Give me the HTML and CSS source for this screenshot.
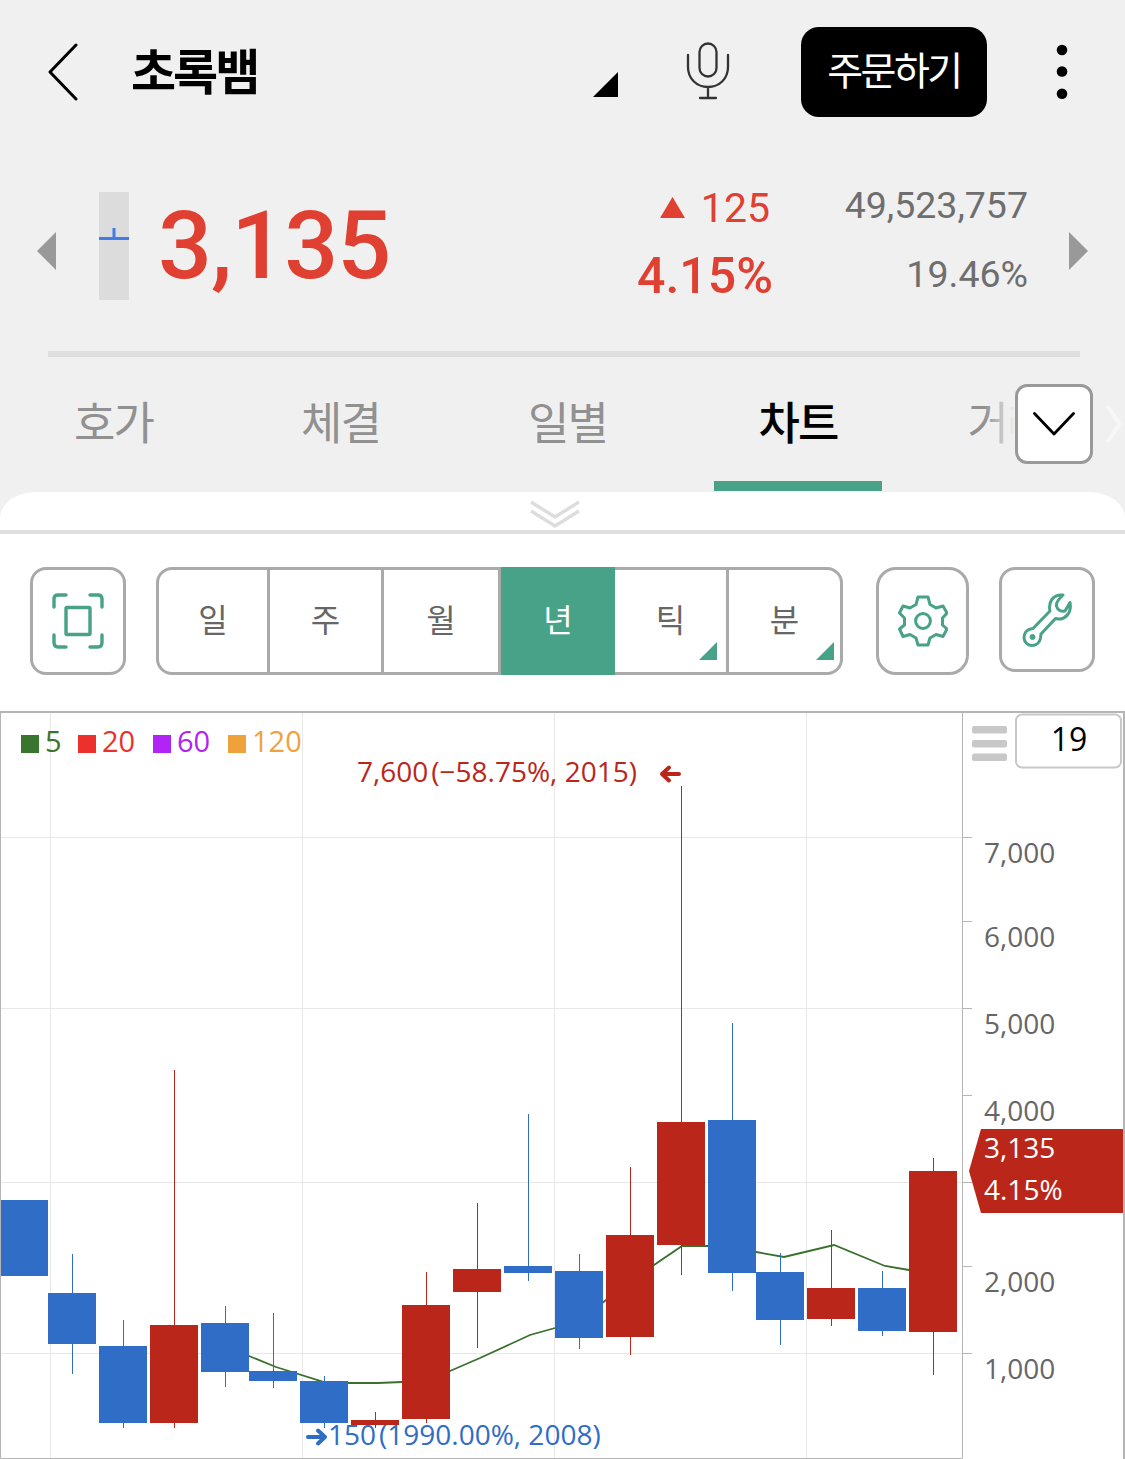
FILE: index.html
```html
<!DOCTYPE html>
<html lang="ko">
<head>
    <meta charset="UTF-8">
    <meta name="viewport" content="width=device-width, initial-scale=1.0">
    <title>초록뱀 - 차트</title>
    <link rel="stylesheet" href="styles.css">
</head>
<body>
    <div class="app">
        <header class="top">
            <div class="title-bar">
                <svg class="back" width="30" height="58" viewBox="0 0 30 58">
                    <path d="M28 2L2 29L28 56" fill="none" stroke="#000" stroke-width="3" stroke-linecap="round" stroke-linejoin="round"/>
                </svg>
                <h1 class="stock-name">초록뱀</h1>
                <svg class="corner" width="25" height="25" viewBox="0 0 25 25"><path d="M25 0V25H0Z"/></svg>
                <svg class="mic" width="44" height="60" viewBox="0 0 44 60" fill="none" stroke="#333" stroke-width="2.3" stroke-linecap="round">
                    <rect x="13.5" y="1.500" width="17" height="33" rx="8.5"/>
                    <path d="M2 13V25C2 37 11 45 22 45S42 37 42 25V13M22 45V56M14 56H30"/>
                </svg>
                <button class="order-btn">주문하기</button>
                <svg class="more" width="12" height="56" viewBox="0 0 12 56">
                    <circle cx="6" cy="6" r="5.3"/><circle cx="6" cy="27.5" r="5.3"/><circle cx="6" cy="49.7" r="5.3"/>
                </svg>
            </div>

            <div class="quote">
                <svg class="prev" width="19" height="38" viewBox="0 0 19 38"><path d="M19 0V38L0 19Z" fill="#999"/></svg>
                <svg class="mini-candle" width="30" height="108" viewBox="0 0 30 108">
                    <path d="M0 0H30V108H0Z" fill="#dcdcdc"/>
                    <path d="M0 46.5H30M15 36V46" stroke="#427be8" stroke-width="3" fill="none"/>
                </svg>
                <strong class="price">3,135</strong>
                <div class="change">
                    <div class="diff"><svg width="25" height="21" viewBox="0 0 25 21"><path d="M12.5 0L25 21H0Z" fill="#df4031"/></svg>125</div>
                    <div class="rate">4.15%</div>
                </div>
                <div class="volume">
                    <div>49,523,757</div>
                    <div>19.46%</div>
                </div>
                <svg class="next" width="19" height="38" viewBox="0 0 19 38"><path d="M0 0V38L19 19Z" fill="#999"/></svg>
            </div>

            <nav class="tabs">
                <a class="tab">호가</a>
                <a class="tab">체결</a>
                <a class="tab">일별</a>
                <a class="tab active">차트</a>
                <a class="tab last">거래</a>
                <div class="tab-more">
                    <button class="tab-toggle">
                        <svg width="42" height="24" viewBox="0 0 42 24"><path d="M1.5 1.5L21 22L40.500 1.500" fill="none" stroke="#000" stroke-width="2.8" stroke-linecap="round" stroke-linejoin="round"/></svg>
                    </button>
                    <svg class="tab-next" width="18" height="40" viewBox="0 0 18 40"><path d="M2 2L15 20L2 38" fill="none" stroke="#f7f7f7" stroke-width="4"/></svg>
                </div>
            </nav>
        </header>

        <div class="sheet-handle">
            <svg width="50" height="28" viewBox="0 0 50 28" fill="none" stroke="#ddd" stroke-width="3.4"><path d="M1 2L25 17L49 2M1 11L25 26L49 11"/></svg>
        </div>

        <div class="toolbar">
            <button class="tool">
                <svg width="52" height="56" viewBox="0 0 52 56" fill="none" stroke="#48a288" stroke-width="3.4" stroke-linecap="round" stroke-linejoin="round">
                    <path d="M2 14V6Q2 2 6 2H14M38 2H46Q50 2 50 6V14M50 42V49Q50 54 46 54H38M14 54H6Q2 54 2 49V42"/>
                    <rect x="14" y="14.500" width="24" height="27" rx="1"/>
                </svg>
            </button>
            <div class="periods">
                <button class="day">일</button>
                <button>주</button>
                <button class="month">월</button>
                <button class="active">년</button>
                <button class="has-menu">틱</button>
                <button class="has-menu minute">분</button>
            </div>
            <button class="tool settings">
                <svg width="50" height="52" viewBox="0 0 50 52" fill="none" stroke="#48a288" stroke-width="3" stroke-linejoin="round">
                    <path d="M20 2H30L32 9.500L38 13L45 11L49 18L44.500 23V30L49 34L45 41.500L38 39.500L32 43L30 50H20L18 43L12 39.500L5 41.500L1.500 34L6.500 30V23L1.500 18L5 11L12 13L18 9.500Z"/>
                    <circle cx="25" cy="26" r="7.400"/>
                </svg>
            </button>
            <button class="tool wrench">
                <svg width="50" height="54" viewBox="0 0 50 54" fill="none" stroke="#48a288" stroke-width="3" stroke-linejoin="round">
                    <path d="M41 2C31 1 26 9 28 18L11 35.500C4 36 2 41 2 45C3 55 17 55 18.500 45L19 41L33.500 25.500C43 28 50 20 48 9.500L43 18Q36 19 34.500 13Q33.500 9 41 2Z"/>
                    <circle cx="10.500" cy="44" r="2.500" fill="#48a288" stroke-width="1"/>
                </svg>
            </button>
        </div>

        <svg class="chart" width="1125" height="748" viewBox="0 711 1125 748">
            <!-- grid -->
            <path class="grid" d="M0 837.5H962M0 1008.5H962M0 1182.5H962M0 1353.5H962M50.500 713V1458M302.500 713V1458M554.500 713V1458M806.500 713V1458"/>

            <!-- 5 year moving average -->
            <polyline class="ma5" points="225,1346 249,1356 276,1367 324,1382 350,1383 378,1383 402,1382 426,1381 450,1371 480,1358 530,1335 555,1328 582,1319 606,1300 654,1265 682,1246 708,1246 733,1249 756,1252 784,1257 834,1245 885,1266 909,1270 933,1274"/>

            <g class="down">
                <path d="M72.500 1254V1374M123.500 1320V1428M225.500 1306V1387M273.500 1313V1388M324.500 1376V1428M528.500 1114V1281M579.500 1254V1349M732.500 1023V1291M780.500 1253V1345M882.500 1271V1336"/>
                <rect x="1" y="1200" width="47" height="76"/>
                <rect x="48" y="1293" width="48" height="51"/>
                <rect x="99" y="1346" width="48" height="77"/>
                <rect x="201" y="1323" width="48" height="49"/>
                <rect x="249" y="1371" width="48" height="10"/>
                <rect x="300" y="1381" width="48" height="42"/>
                <rect x="504" y="1266" width="48" height="7"/>
                <rect x="555" y="1271" width="48" height="67"/>
                <rect x="708" y="1120" width="48" height="153"/>
                <rect x="756" y="1272" width="48" height="48"/>
                <rect x="858" y="1288" width="48" height="43"/>
            </g>
            <g class="up">
                <path d="M174.500 1070V1428M375.500 1412V1428M426.500 1272V1423M477.500 1203V1348M630.500 1167V1355M681.500 786V1275M831.500 1230V1326M933.500 1158V1375"/>
                <rect x="150" y="1325" width="48" height="98"/>
                <rect x="351" y="1420" width="48" height="5"/>
                <rect x="402" y="1305" width="48" height="114"/>
                <rect x="453" y="1269" width="48" height="23"/>
                <rect x="606" y="1235" width="48" height="102"/>
                <rect x="657" y="1122" width="48" height="123"/>
                <rect x="807" y="1288" width="48" height="31"/>
                <rect x="909" y="1171" width="48" height="161"/>
            </g>

            <!-- legend -->
            <g class="legend">
                <g fill="#39752f"><rect x="21" y="735" width="18" height="18"/><text x="45" y="752">5</text></g>
                <g fill="#ec312d"><rect x="78" y="735" width="18" height="18"/><text x="102" y="752">20</text></g>
                <g fill="#b223f5"><rect x="153" y="735" width="18" height="18"/><text x="177" y="752">60</text></g>
                <g fill="#f0a23a"><rect x="228" y="735" width="18" height="18"/><text x="252" y="752">120</text></g>
            </g>

            <!-- high / low -->
            <text class="high" x="357" y="782">7,600<tspan dx="3">(−58.75%, 2015)</tspan></text>
            <path class="arrow high-arrow" d="M679 774H662M669 767.500L662 774L669 780.500"/>
            <text class="low" x="328" y="1445">150<tspan dx="3">(1990.00%, 2008)</tspan></text>
            <path class="arrow low-arrow" d="M308 1437H325M318 1430.500L325 1437L318 1443.500"/>

            <!-- axis -->
            <path class="frame" d="M962.500 713V1458.500H0.500V713M963 837.500H972M963 921.500H972M963 1008.500H972M963 1095.500H972M963 1182.500H972M963 1266.500H972M963 1353.500H972"/>
            <path class="frame thick" d="M0 712H1124V1459"/>
            <g class="axis">
                <text x="984" y="863">7,000</text>
                <text x="984" y="947">6,000</text>
                <text x="984" y="1034">5,000</text>
                <text x="984" y="1121">4,000</text>
                <text x="984" y="1292">2,000</text>
                <text x="984" y="1379">1,000</text>
            </g>
            <path d="M981 1129H1123V1213H981L969 1171Z" fill="#ba271a"/>
            <g class="current">
                <text x="984" y="1158">3,135</text>
                <text x="984" y="1200">4.15%</text>
            </g>
            <g fill="#c8c8c8">
                <rect x="972" y="726" width="35" height="7.500" rx="2"/>
                <rect x="972" y="740" width="35" height="7.500" rx="2"/>
                <rect x="972" y="753.500" width="35" height="7.500" rx="2"/>
            </g>
            <rect x="1016" y="714.500" width="105" height="53" rx="6" fill="#fff" stroke="#c8c8c8" stroke-width="2"/>
            <text class="count" x="1069" y="751">19</text>
        </svg>
    </div>
</body>
</html>
```
FILE: styles.css
```css
* {
    box-sizing: border-box;
}
body {
    margin: 0;
    background: #f0f0f0;
    font-family: Roboto, "Noto Sans CJK KR", sans-serif;
    color: #000;
}
button {
    padding: 0;
    border: none;
    background: none;
    font-family: inherit;
}
svg {
    display: block;
    flex-shrink: 0;
}
.app {
    width: 1125px;
    height: 1459px;
    overflow: hidden;
}
.top {
    height: 492px;
}
.title-bar {
    display: flex;
    align-items: center;
    height: 144px;
    padding: 0 57px 0 48px;
}
.stock-name {
    flex: 1;
    margin: 4px 0 0 53px;
    font-size: 49px;
    font-weight: 700;
    line-height: 60px;
    letter-spacing: -3px;
}
.corner {
    margin: 25px 68px 0 0;
}
.mic {
    margin-right: 71px;
}
.order-btn {
    width: 186px;
    height: 90px;
    margin-right: 69px;
    border-radius: 18px;
    background: #000;
    color: #fff;
    font-size: 39px;
    letter-spacing: -2.5px;
    line-height: 90px;
}
.quote {
    display: flex;
    align-items: center;
    height: 213px;
    margin: 0 37px;
    position: relative;
}
.quote::after {
    content: "";
    position: absolute;
    left: 11px;
    right: 8px;
    bottom: 0;
    height: 6px;
    background: #dfdfdf;
}
.mini-candle {
    margin: 0 29px 10px 43px;
}
.price {
    flex: 1;
    color: #df4031;
    font-size: 95px;
    font-weight: 500;
    line-height: 110px;
    letter-spacing: -1px;
    padding-bottom: 9px;
}
.change {
    color: #df4031;
    text-align: right;
    padding-bottom: 18px;
}
.diff {
    display: flex;
    align-items: center;
    justify-content: flex-end;
    gap: 16px;
    height: 68px;
    margin-right: 3px;
    font-size: 41px;
}
.rate {
    height: 68px;
    font-size: 50px;
    font-weight: 500;
    line-height: 68px;
}
.volume {
    width: 255px;
    color: #6e6e6e;
    font-size: 37.5px;
    line-height: 69px;
    text-align: right;
    padding-bottom: 21px;
}
.next {
    margin-left: 41px;
}
.tabs {
    display: flex;
    height: 135px;
    position: relative;
}
.tab {
    width: 227px;
    height: 134px;
    color: #919191;
    font-size: 45px;
    line-height: 135px;
    letter-spacing: -2px;
    text-align: center;
    flex-shrink: 0;
}
.tab.active {
    width: 168px;
    margin: 0 30px 0 33px;
    border-bottom: 10px solid #48a288;
    color: #000;
    font-weight: 500;
}
.tab.last {
    width: 190px;
}
.tab-more {
    display: flex;
    align-items: center;
    gap: 12px;
    position: absolute;
    left: 985px;
    top: 27px;
    height: 80px;
    padding-left: 30px;
    background: linear-gradient(to right, rgba(240, 240, 240, 0), #f0f0f0 30px);
}
.tab-toggle {
    display: flex;
    align-items: center;
    justify-content: center;
    width: 78px;
    height: 80px;
    border: 3px solid #999;
    border-radius: 12px;
    background: #fff;
}
.sheet-handle {
    display: flex;
    justify-content: center;
    height: 42px;
    padding: 8px 15px 0 0;
    border-bottom: 4px solid #dfdfdf;
    border-radius: 36px 36px 0 0 / 26px 26px 0 0;
    background: #fff;
}
.toolbar {
    display: flex;
    height: 177px;
    padding: 33px 30px 0;
    background: #fff;
}
.tool {
    display: flex;
    align-items: center;
    justify-content: center;
    width: 96px;
    height: 108px;
    border: 3px solid #aaa;
    border-radius: 16px;
}
.settings {
    width: 93px;
    margin: 0 30px 0 33px;
    border-radius: 20px;
}
.wrench {
    height: 105px;
}
.periods {
    display: flex;
    width: 687px;
    height: 108px;
    margin-left: 30px;
    border: 3px solid #aaa;
    border-radius: 16px;
}
.periods button {
    width: 114px;
    padding-bottom: 6px;
    border-right: 3px solid #aaa;
    color: #666;
    font-size: 32px;
    position: relative;
}
.periods .day {
    width: 111px;
}
.periods .month {
    width: 117px;
}
.periods .minute {
    width: 111px;
    border-right: none;
}
.periods .active {
    margin: -3px 0;
    border: none;
    background: #48a288;
    color: #fff;
}
.has-menu::after {
    content: "";
    position: absolute;
    right: 9px;
    bottom: 12px;
    width: 18px;
    height: 18px;
    background: #48a288;
    clip-path: polygon(100% 0, 100% 100%, 0 100%);
}
.minute::after {
    right: 6px;
}
.chart {
    background: #fff;
    font-family: "Open Sans", "Noto Sans", sans-serif;
    font-size: 28px;
}
.grid {
    stroke: #e8e8e8;
}
.ma5 {
    fill: none;
    stroke: #39702c;
    stroke-width: 1.8;
}
.up {
    fill: #ba271a;
}
.down {
    fill: #2f6dc7;
}
.up path {
    stroke: #ba271a;
}
.down path {
    stroke: #2f6dc7;
}
.frame {
    fill: none;
    stroke: #b5b5b5;
}
.thick {
    stroke-width: 2;
}
.arrow {
    fill: none;
    stroke-width: 4;
    stroke-linecap: round;
    stroke-linejoin: round;
}
.high {
    fill: #ba271a;
}
.high-arrow {
    stroke: #ba271a;
}
.low {
    fill: #2f6dc7;
}
.low-arrow {
    stroke: #2f6dc7;
}
.axis {
    fill: #666;
}
.current {
    fill: #fff;
}
.legend {
    font-size: 29px;
}
.count {
    font-size: 32px;
    text-anchor: middle;
}
```
